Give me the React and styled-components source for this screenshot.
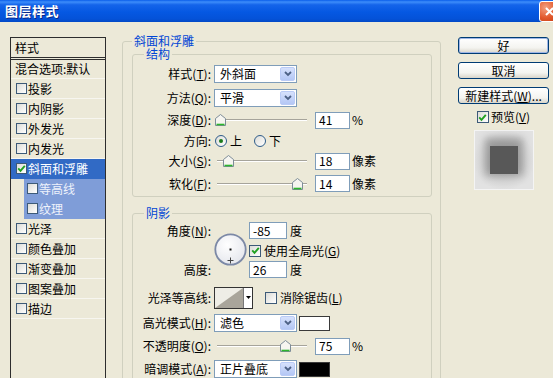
import React from 'react';
import styled, {createGlobalStyle} from 'styled-components';


const GlobalStl = createGlobalStyle`
  html, body {
    margin: 0;
    padding: 0;
    background: #ECE9D8;
  }
  body {
    font-family: "Noto Sans CJK SC", "DejaVu Sans", sans-serif;
    font-size: 12px;
    line-height: 14px;
    color: #000;
  }
`


const WindowStl = styled.div`
  width: 553px;
  height: 378px;
  overflow: hidden;
  background: #ECE9D8;
  display: flex;
  flex-direction: column;
`


const TitleBarStl = styled.div`
  height: 22px;
  flex-shrink: 0;
  display: flex;
  align-items: center;
  justify-content: space-between;
  padding-left: 5px;
  background: linear-gradient(to bottom, #0A5EEA 0%, #3D8DFA 9%, #1464EA 22%, #0558E2 55%, #0452D8 85%, #0349C6 100%);
`


const TitleStl = styled.span`
  color: #fff;
  font-weight: bold;
  font-size: 13px;
  letter-spacing: 0.5px;
  text-shadow: 1px 1px 0 #0A2A8A;
`


const CloseBtnStl = styled.div`
  width: 21px;
  height: 21px;
  margin-right: -7px;
  box-sizing: border-box;
  border: 1px solid #fff;
  border-radius: 3px;
  background: radial-gradient(circle at 30% 30%, #F3A080, #E2582C 55%, #C03A12);
  display: flex;
  align-items: center;
  justify-content: center;
`


const BodyStl = styled.div`
  flex: 1;
  display: flex;
  align-items: flex-start;
  padding: 13px 0 0 10px;
`


/* left list */

const ListPanelStl = styled.div`
  width: 96px;
  height: 400px;
  flex-shrink: 0;
  margin-top: 2px;
  box-sizing: border-box;
  border: 1px solid #2D2D2D;
`


const ListHeadStl = styled.div`
  height: 19px;
  padding-left: 4px;
  display: flex;
  align-items: center;
  border-bottom: 3px double #2D2D2D;
`


const ListRowStl = styled.div`
  height: ${p => p.$h || 20}px;
  box-sizing: border-box;
  display: flex;
  align-items: center;
  gap: 1px;
  margin-left: ${p => p.$sub ? 13 : 0}px;
  padding-left: ${p => p.$sub ? 3 : p.$plain ? 4 : 5}px;
  background: ${p => p.$selected ? '#316AC5' : p.$sub ? '#7F9DD8' : 'transparent'};
  color: ${p => p.$selected ? '#fff' : p.$sub ? '#EEF2FB' : '#000'};
  border-bottom: 1px solid ${p => (p.$selected || p.$sub) ? 'transparent' : '#F7F6F0'};
  white-space: nowrap;
`


const CheckBoxStl = styled.span`
  width: ${p => p.$size || 12}px;
  height: ${p => p.$size || 12}px;
  box-sizing: border-box;
  flex-shrink: 0;
  border: 1px solid #3D5A78;
  background: linear-gradient(135deg, #DCDCD7, #FFFFFF);
  display: inline-flex;
  align-items: center;
  justify-content: center;
`


/* main area */

const MainStl = styled.div`
  width: 319px;
  flex-shrink: 0;
  margin-left: 16px;
`


const GroupStl = styled.fieldset`
  margin: ${p => p.$mt || 0}px 0 0;
  padding: 0 ${p => p.$pr || 0}px ${p => p.$pb || 0}px ${p => p.$pl || 0}px;
  border: 1px solid #D0D0BF;
  border-radius: 3px;
  min-width: 0;
`


const LegendStl = styled.legend`
  color: #0046D5;
  padding: 0 2px;
  margin-left: ${p => p.$ml || 0}px;
  line-height: 12px;
  height: 12px;
  font-size: 12px;
`


const FieldRowStl = styled.div`
  display: flex;
  align-items: center;
  height: ${p => p.$h}px;
  margin-top: ${p => p.$mt || 0}px;
`


const FieldLabelStl = styled.div`
  width: 78px;
  flex-shrink: 0;
  text-align: right;
  white-space: nowrap;
`


const ControlsStl = styled.div`
  display: flex;
  align-items: center;
  margin-left: 3px;
  white-space: nowrap;
`


const AccStl = styled.span`
  text-decoration: underline;
`


const SelectStl = styled.div`
  width: 83px;
  height: 18px;
  box-sizing: border-box;
  border: 1px solid #7F9DB9;
  background: #fff;
  display: flex;
  align-items: center;
  justify-content: space-between;
  padding: 0 1px 0 5px;
`


const SelectBtnStl = styled.span`
  width: 15px;
  height: 14px;
  box-sizing: border-box;
  border-radius: 2px;
  border: 1px solid #BACBF6;
  background: linear-gradient(#D6E1FC, #B4C7F5);
  display: flex;
  align-items: center;
  justify-content: center;
`


const NumInputStl = styled.div`
  width: ${p => p.$w || 35}px;
  height: 17px;
  box-sizing: border-box;
  border: 1px solid #7F9DB9;
  background: #fff;
  padding-left: 3px;
  margin-left: ${p => p.$ml || 0}px;
  display: flex;
  align-items: center;
`


const UnitStl = styled.span`
  margin-left: ${p => p.$ml || 2}px;
`


const SliderStl = styled.div`
  position: relative;
  width: 95px;
  height: 14px;
  display: flex;
  align-items: center;
`


const TrackStl = styled.div`
  flex: 1;
  margin: 0 2px 0 3px;
  height: 0;
  border-top: 1px solid #A6A49B;
  border-bottom: 1px solid #FFFFFF;
`


const ThumbStl = styled.svg`
  position: absolute;
  top: 1px;
`


const RadioStl = styled.span`
  width: 12px;
  height: 12px;
  box-sizing: border-box;
  border-radius: 50%;
  border: 1px solid #2F5D8A;
  background: linear-gradient(135deg, #DCDCD7, #FFFFFF);
  display: inline-flex;
  align-items: center;
  justify-content: center;
  margin-left: ${p => p.$ml || 0}px;
  margin-right: 3px;
`


const RadioDotStl = styled.span`
  width: 4px;
  height: 4px;
  border-radius: 50%;
  background: #1A7A1A;
`


const AngleBlockStl = styled.div`
  display: grid;
  grid-template-columns: 78px 38px 1fr;
  grid-template-rows: 21px 19px 19px;
  padding-top: 1px;
  align-items: center;
`


const DialCellStl = styled.div`
  grid-column: 2;
  grid-row: 1 / 4;
  margin-left: 3px;
  display: flex;
  align-items: center;
`


const InlineRowStl = styled.div`
  display: flex;
  align-items: center;
  white-space: nowrap;
  gap: ${p => p.$gap || 0}px;
`


const ContourStl = styled.div`
  display: flex;
  height: 22px;
  box-sizing: border-box;
  border: 1px solid #333;
  background: #fff;
`


const ContourArrowStl = styled.div`
  width: 8px;
  border-left: 1px solid #777;
  display: flex;
  align-items: center;
  justify-content: center;
`


const SwatchStl = styled.div`
  width: 31px;
  height: 15px;
  box-sizing: border-box;
  margin-left: 2px;
  border: 1px solid #3A3A3A;
  background: ${p => p.$color};
`


/* right buttons */

const SideStl = styled.div`
  width: 91px;
  flex-shrink: 0;
  margin-left: 17px;
  margin-top: 2px;
  display: flex;
  flex-direction: column;
`


const ButtonStl = styled.div`
  height: 17px;
  box-sizing: border-box;
  border: 1px solid #003C74;
  border-radius: 3px;
  background: linear-gradient(#FFFFFF, #F4F4F0 65%, #D9D5CA);
  display: flex;
  align-items: center;
  justify-content: center;
  margin-bottom: ${p => p.$mb ?? 8}px;
  box-shadow: ${p => p.$default ? 'inset 0 0 0 1px #9FB6E6' : 'none'};
  white-space: nowrap;
`


const PreviewCheckStl = styled.div`
  height: 18px;
  display: flex;
  align-items: center;
  justify-content: center;
  gap: 2px;
`


const PreviewStl = styled.div`
  width: 60px;
  height: 60px;
  margin-top: 4px;
  align-self: center;
  box-sizing: border-box;
  border: 1px solid #F4F4F4;
  background: radial-gradient(circle, #C8C8C8 20%, #E2E2E2 75%);
  display: flex;
  align-items: center;
  justify-content: center;
`


const PreviewSquareStl = styled.div`
  width: 28px;
  height: 28px;
  background: #585858;
  box-shadow: 0 -3px 8px 5px rgba(85, 85, 85, 0.45);
`



const LIST_ITEMS = [
  {label: '投影'},
  {label: '内阴影'},
  {label: '外发光'},
  {label: '内发光'},
  {label: '斜面和浮雕', checked: true, selected: true},
  {label: '等高线', sub: true},
  {label: '纹理', sub: true},
  {label: '光泽'},
  {label: '颜色叠加'},
  {label: '渐变叠加'},
  {label: '图案叠加'},
  {label: '描边'},
]


const CheckMark = () => (
  <svg width="9" height="9" viewBox="0 0 9 9">
    <path d="M1.2 4.4 L3.5 6.8 L7.8 1.8" fill="none" stroke="#21A121" strokeWidth="1.9"/>
  </svg>
)


const CheckBox = ({checked, size}) => (
  <CheckBoxStl $size={size}>{checked ? <CheckMark/> : null}</CheckBoxStl>
)


const Select = ({value}) => (
  <SelectStl>
    <span>{value}</span>
    <SelectBtnStl>
      <svg width="8" height="6" viewBox="0 0 8 6">
        <path d="M1 1 L4 4 L7 1" fill="none" stroke="#4D6185" strokeWidth="1.8"/>
      </svg>
    </SelectBtnStl>
  </SelectStl>
)


const Slider = ({frac}) => (
  <SliderStl>
    <TrackStl/>
    <ThumbStl style={{left: `${Math.round(2 + frac * 92 - 5)}px`}} width="11" height="12" viewBox="0 0 11 12">
      <path d="M5.5 0.5 L10.5 4.5 V11.5 H0.5 V4.5 Z" fill="#F6F5F0" stroke="#7D8C98"/>
      <path d="M1.5 10.5 H9.5" stroke="#2DB52D" strokeWidth="1.6"/>
    </ThumbStl>
  </SliderStl>
)


const Dial = () => (
  <svg width="33" height="33" viewBox="0 0 33 33">
    <defs>
      <radialGradient id="dialFill" cx="40%" cy="35%" r="70%">
        <stop offset="0%" stopColor="#FFFFFF"/>
        <stop offset="100%" stopColor="#E4E6EC"/>
      </radialGradient>
    </defs>
    <circle cx="16.5" cy="16.5" r="15.2" fill="url(#dialFill)" stroke="#7C89A6" strokeWidth="1.8"/>
    <rect x="15.5" y="15.5" width="2" height="2" fill="#111"/>
    <path d="M16.5 24.5 V30.5 M13.5 27.5 H19.5" stroke="#444" strokeWidth="1"/>
  </svg>
)


export default function App() {
  return (
    <>
      <GlobalStl/>
      <WindowStl>
        <TitleBarStl>
          <TitleStl>图层样式</TitleStl>
          <CloseBtnStl>
            <svg width="11" height="11" viewBox="0 0 11 11">
              <path d="M2 2 L9 9 M9 2 L2 9" stroke="#fff" strokeWidth="2"/>
            </svg>
          </CloseBtnStl>
        </TitleBarStl>

        <BodyStl>
          <ListPanelStl>
            <ListHeadStl>样式</ListHeadStl>
            <ListRowStl $h={19} $plain>混合选项:默认</ListRowStl>
            {LIST_ITEMS.map(item => (
              <ListRowStl key={item.label} $selected={item.selected} $sub={item.sub}>
                <CheckBox checked={item.checked} size={11}/>
                <span>{item.label}</span>
              </ListRowStl>
            ))}
          </ListPanelStl>

          <MainStl>
            <GroupStl $pl={9} $pr={8} $pb={30}>
              <LegendStl>斜面和浮雕</LegendStl>

              <GroupStl $mt={1}>
                <LegendStl $ml={11}>结构</LegendStl>

                <FieldRowStl $h={24} $mt={2}>
                  <FieldLabelStl>样式(<AccStl>T</AccStl>):</FieldLabelStl>
                  <ControlsStl><Select value="外斜面"/></ControlsStl>
                </FieldRowStl>

                <FieldRowStl $h={24}>
                  <FieldLabelStl>方法(<AccStl>Q</AccStl>):</FieldLabelStl>
                  <ControlsStl><Select value="平滑"/></ControlsStl>
                </FieldRowStl>

                <FieldRowStl $h={20}>
                  <FieldLabelStl>深度(<AccStl>D</AccStl>):</FieldLabelStl>
                  <ControlsStl>
                    <Slider frac={0.041}/>
                    <NumInputStl $ml={6}>41</NumInputStl>
                    <UnitStl>%</UnitStl>
                  </ControlsStl>
                </FieldRowStl>

                <FieldRowStl $h={21}>
                  <FieldLabelStl>方向:</FieldLabelStl>
                  <ControlsStl>
                    <RadioStl $ml={1}><RadioDotStl/></RadioStl>
                    <span>上</span>
                    <RadioStl $ml={12}/>
                    <span>下</span>
                  </ControlsStl>
                </FieldRowStl>

                <FieldRowStl $h={20}>
                  <FieldLabelStl>大小(<AccStl>S</AccStl>):</FieldLabelStl>
                  <ControlsStl>
                    <Slider frac={0.13}/>
                    <NumInputStl $ml={6}>18</NumInputStl>
                    <UnitStl>像素</UnitStl>
                  </ControlsStl>
                </FieldRowStl>

                <FieldRowStl $h={25}>
                  <FieldLabelStl>软化(<AccStl>F</AccStl>):</FieldLabelStl>
                  <ControlsStl>
                    <Slider frac={0.875}/>
                    <NumInputStl $ml={6}>14</NumInputStl>
                    <UnitStl>像素</UnitStl>
                  </ControlsStl>
                </FieldRowStl>
              </GroupStl>

              <GroupStl $mt={10}>
                <LegendStl $ml={11}>阴影</LegendStl>

                <AngleBlockStl>
                  <FieldLabelStl>角度(<AccStl>N</AccStl>):</FieldLabelStl>
                  <DialCellStl><Dial/></DialCellStl>
                  <InlineRowStl>
                    <NumInputStl $w={38}>-85</NumInputStl>
                    <UnitStl $ml={3}>度</UnitStl>
                  </InlineRowStl>
                  <InlineRowStl style={{gridColumn: 3, gridRow: 2}} $gap={3}>
                    <CheckBox checked/>
                    <span>使用全局光(<AccStl>G</AccStl>)</span>
                  </InlineRowStl>
                  <FieldLabelStl style={{gridColumn: 1, gridRow: 3}}>高度:</FieldLabelStl>
                  <InlineRowStl style={{gridColumn: 3, gridRow: 3}}>
                    <NumInputStl $w={38}>26</NumInputStl>
                    <UnitStl $ml={3}>度</UnitStl>
                  </InlineRowStl>
                </AngleBlockStl>

                <FieldRowStl $h={25} $mt={6}>
                  <FieldLabelStl>光泽等高线:</FieldLabelStl>
                  <ControlsStl>
                    <ContourStl>
                      <svg width="28" height="20" viewBox="0 0 28 20">
                        <rect width="28" height="20" fill="#EEEDE6"/>
                        <polygon points="0,20 28,0 28,20" fill="#A9A59B"/>
                      </svg>
                      <ContourArrowStl>
                        <svg width="5" height="3" viewBox="0 0 5 3">
                          <polygon points="0,0 5,0 2.5,3" fill="#000"/>
                        </svg>
                      </ContourArrowStl>
                    </ContourStl>
                    <InlineRowStl $gap={3} style={{marginLeft: 12}}>
                      <CheckBox/>
                      <span>消除锯齿(<AccStl>L</AccStl>)</span>
                    </InlineRowStl>
                  </ControlsStl>
                </FieldRowStl>

                <FieldRowStl $h={26}>
                  <FieldLabelStl>高光模式(<AccStl>H</AccStl>):</FieldLabelStl>
                  <ControlsStl>
                    <Select value="滤色"/>
                    <SwatchStl $color="#FFFFFF"/>
                  </ControlsStl>
                </FieldRowStl>

                <FieldRowStl $h={20}>
                  <FieldLabelStl>不透明度(<AccStl>O</AccStl>):</FieldLabelStl>
                  <ControlsStl>
                    <Slider frac={0.75}/>
                    <NumInputStl $ml={6}>75</NumInputStl>
                    <UnitStl>%</UnitStl>
                  </ControlsStl>
                </FieldRowStl>

                <FieldRowStl $h={26}>
                  <FieldLabelStl>暗调模式(<AccStl>A</AccStl>):</FieldLabelStl>
                  <ControlsStl>
                    <Select value="正片叠底"/>
                    <SwatchStl $color="#000000"/>
                  </ControlsStl>
                </FieldRowStl>
              </GroupStl>
            </GroupStl>
          </MainStl>

          <SideStl>
            <ButtonStl $default>好</ButtonStl>
            <ButtonStl>取消</ButtonStl>
            <ButtonStl $mb={4}>新建样式(<AccStl>W</AccStl>)...</ButtonStl>
            <PreviewCheckStl>
              <CheckBox checked/>
              <span>预览(<AccStl>V</AccStl>)</span>
            </PreviewCheckStl>
            <PreviewStl>
              <PreviewSquareStl/>
            </PreviewStl>
          </SideStl>
        </BodyStl>
      </WindowStl>
    </>
  );
}
